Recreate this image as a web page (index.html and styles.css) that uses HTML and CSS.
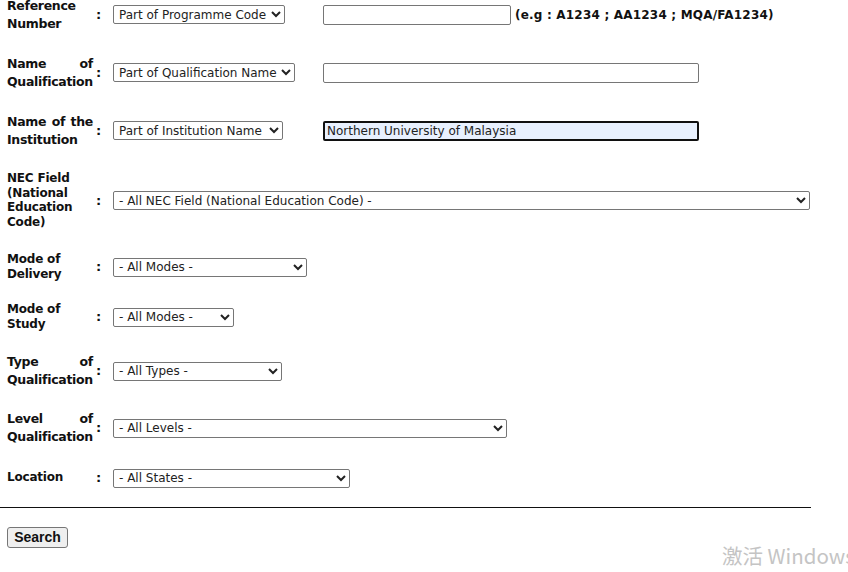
FILE: index.html
```html
<!DOCTYPE html>
<html lang="en">
<head>
  <meta charset="UTF-8" />
  <title>Search Qualification</title>
  <link rel="stylesheet" href="styles.css">
</head>
<body>

  <!-- search form -->
  <form class="search-form">
    <div class="row">
      <div class="label big">Reference Number</div>
      <div class="colon">:</div>
      <div class="pair">
        <select class="sel w172"><option>Part of Programme Code</option></select>
        <div class="field">
          <input type="text" class="txt short">
          <span class="hint">(e.g : A1234 ; AA1234 ; MQA/FA1234)</span>
        </div>
      </div>
    </div>

    <div class="row">
      <div class="label big">Name of Qualification</div>
      <div class="colon">:</div>
      <div class="pair">
        <select class="sel w182"><option>Part of Qualification Name</option></select>
        <div class="field"><input type="text" class="txt long"></div>
      </div>
    </div>

    <div class="row">
      <div class="label big">Name of the Institution</div>
      <div class="colon">:</div>
      <div class="pair">
        <select class="sel w170"><option>Part of Institution Name</option></select>
        <div class="field"><input type="text" class="txt long focus" value="Northern University of Malaysia"></div>
      </div>
    </div>

    <div class="row">
      <div class="label small">NEC Field (National Education Code)</div>
      <div class="colon">:</div>
      <div><select class="sel w697"><option>- All NEC Field (National Education Code) -</option></select></div>
    </div>

    <div class="row">
      <div class="label small">Mode of Delivery</div>
      <div class="colon">:</div>
      <div><select class="sel w194"><option>- All Modes -</option></select></div>
    </div>

    <div class="row tight2">
      <div class="label small">Mode of Study</div>
      <div class="colon">:</div>
      <div><select class="sel w121"><option>- All Modes -</option></select></div>
    </div>

    <div class="row tight1">
      <div class="label big">Type of Qualification</div>
      <div class="colon">:</div>
      <div><select class="sel w169"><option>- All Types -</option></select></div>
    </div>

    <div class="row tight1">
      <div class="label big">Level of Qualification</div>
      <div class="colon">:</div>
      <div><select class="sel w394"><option>- All Levels -</option></select></div>
    </div>

    <div class="row tight1">
      <div class="label small">Location</div>
      <div class="colon">:</div>
      <div><select class="sel w237"><option>- All States -</option></select></div>
    </div>
  </form>

  <hr class="rule">

  <button class="btn" type="button">Search</button>

  <div class="watermark">激活 Windows</div>

</body>
</html>
```

FILE: styles.css
```css
html, body {
  height: 100%;
  overflow: hidden;
}
body {
  margin: 0;
  font-family: "DejaVu Sans", Verdana, sans-serif;
  color: #111;
  background: #fff;
  position: relative;
}
.search-form {
  display: flex;
  flex-direction: column;
  gap: 23px;
  margin-top: -3px;
  padding-left: 7px;
}
.row {
  display: grid;
  grid-template-columns: 86px 20px 1fr;
  align-items: center;
}
.tight1 { margin-top: -1px; }
.tight2 { margin-top: -2px; }
.label { font-weight: bold; }
.label.big {
  font-size: 12.5px;
  letter-spacing: -0.3px;
  line-height: 17.5px;
  text-align: justify;
}
.label.small {
  font-size: 12px;
  letter-spacing: -0.2px;
  line-height: 14.5px;
}
.colon {
  font-size: 13px;
  font-weight: bold;
  padding-left: 3px;
}
.pair {
  display: grid;
  grid-template-columns: 210px 1fr;
  align-items: center;
}
.field {
  display: flex;
  align-items: center;
  gap: 4px;
}
.sel {
  font-family: "DejaVu Sans", Verdana, sans-serif;
  font-size: 12px;
  height: 19px;
  padding: 0 1px;
  border: 1px solid #767676;
  border-radius: 2px;
  background: #fff;
  color: #222;
}
.w172 { width: 172px; }
.w182 { width: 182px; }
.w170 { width: 170px; }
.w697 { width: 697px; }
.w194 { width: 194px; }
.w121 { width: 121px; }
.w169 { width: 169px; }
.w394 { width: 394px; }
.w237 { width: 237px; }
.txt {
  box-sizing: border-box;
  height: 20px;
  border: 1px solid #767676;
  border-radius: 2px;
  font-family: "DejaVu Sans", Verdana, sans-serif;
  font-size: 12px;
  padding: 0 3px;
  color: #222;
  margin: 0;
}
.short { width: 188px; }
.long { width: 376px; }
.focus {
  background: #e8f0fe;
  border: 2px solid #101010;
  padding: 0 2px;
}
.hint {
  font-size: 12px;
  font-weight: bold;
  letter-spacing: 0.2px;
  white-space: nowrap;
}
.rule {
  width: 811px;
  margin: 19px 0 0 0;
  border: 0;
  border-top: 1px solid #111;
}
.btn {
  margin: 19px 0 0 7px;
  height: 21px;
  width: 61px;
  padding: 0;
  font-family: "Liberation Sans", Arial, sans-serif;
  font-size: 14px;
  font-weight: bold;
  background: #efefef;
  border: 1px solid #767676;
  border-radius: 3px;
  color: #111;
}
.watermark {
  position: absolute;
  left: 722px;
  top: 540px;
  font-family: "Noto Sans CJK SC", "Open Sans", sans-serif;
  font-size: 20.5px;
  color: #c4c4c4;
  white-space: nowrap;
}
```
